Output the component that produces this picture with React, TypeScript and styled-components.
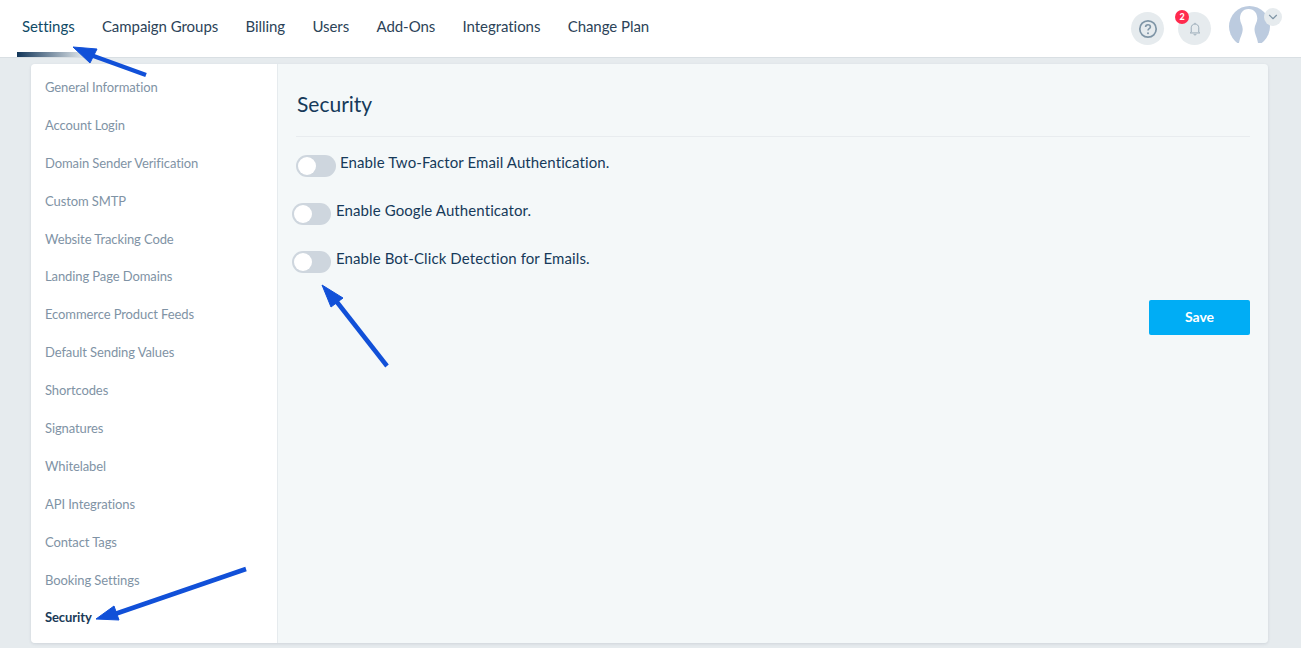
import React from 'react';
import styled, { createGlobalStyle } from 'styled-components';
import { ChevronDown } from 'lucide-react';

const NAV_ITEMS = ['Settings', 'Campaign Groups', 'Billing', 'Users', 'Add-Ons', 'Integrations', 'Change Plan'];

const MENU_ITEMS = [
  'General Information',
  'Account Login',
  'Domain Sender Verification',
  'Custom SMTP',
  'Website Tracking Code',
  'Landing Page Domains',
  'Ecommerce Product Feeds',
  'Default Sending Values',
  'Shortcodes',
  'Signatures',
  'Whitelabel',
  'API Integrations',
  'Contact Tags',
  'Booking Settings',
  'Security',
];

const OPTIONS = [
  { label: 'Enable Two-Factor Email Authentication.', first: true },
  { label: 'Enable Google Authenticator.', first: false },
  { label: 'Enable Bot-Click Detection for Emails.', first: false },
];

const Arrows = () => (
  <ArrowLayer width="1301" height="648" viewBox="0 0 1301 648">
    <g fill="#1150d8" stroke="#1150d8">
      <line x1="146" y1="75" x2="88" y2="54" strokeWidth="4.5" />
      <polygon points="73,47 97,49 90,63" strokeWidth="1" />
      <line x1="387" y1="366" x2="333" y2="297" strokeWidth="4.5" />
      <polygon points="322,285 343,298 331,307" strokeWidth="1" />
      <line x1="246" y1="569" x2="115" y2="614" strokeWidth="4.5" />
      <polygon points="96,619 114,606 119,620" strokeWidth="1" />
    </g>
  </ArrowLayer>
);

const App: React.FC = () => {
  return (
    <>
      <GlobalStyle />
      <Page>
        <Header>
          <Nav>
            {NAV_ITEMS.map((item, index) => (
              <NavLink key={item} $active={index === 0}>
                {item}
              </NavLink>
            ))}
          </Nav>
          <HeaderRight>
            <RoundButton>
              <svg width="20" height="20" viewBox="0 0 20 20" fill="none">
                <circle cx="10" cy="10" r="8.2" stroke="#7f95a6" strokeWidth="1.7" />
                <path
                  d="M7.6 8c0-1.4 1-2.3 2.4-2.3s2.4.9 2.4 2.2c0 1.800-2.400 1.800-2.400 3.600"
                  stroke="#7f95a6"
                  strokeWidth="1.6"
                />
                <circle cx="10" cy="14.2" r="1" fill="#7f95a6" />
              </svg>
            </RoundButton>
            <BellButton>
              <Badge>2</Badge>
              <svg width="12" height="14" viewBox="0 0 14 16" fill="none">
                <path
                  d="M2.6 11.6V6.5C2.6 4 4.5 2.2 7 2.2s4.400 1.800 4.400 4.300v5.100l1.100 1H1.500l1.100-1Z"
                  stroke="#8fa1af"
                  strokeWidth="1"
                />
                <path d="M5.600 13.800c.2.900.700 1.300 1.400 1.300s1.200-.400 1.400-1.300M7 .800v1.400" stroke="#8fa1af" strokeWidth="1" />
              </svg>
            </BellButton>
            <Avatar>
              <svg width="41" height="37" viewBox="0 0 41 37">
                <defs>
                  <clipPath id="avatar-clip">
                    <circle cx="20.5" cy="20.5" r="20.5" />
                  </clipPath>
                </defs>
                <g clipPath="url(#avatar-clip)">
                  <rect width="41" height="41" fill="#bccbdf" />
                  <path
                    d="M19.500 3C13.500 3 11 7.500 11 12.500 11 16.500 13.700 19 13.700 23 13.700 28 11 31 10 37H29C28 31 25.500 28 25.500 23 25.500 19 28.300 16.500 28.300 12.500 28.300 7.500 25.500 3 19.500 3Z"
                    fill="#fff"
                  />
                </g>
              </svg>
              <AvatarCaret>
                <ChevronDown size={14} color="#7f95a6" />
              </AvatarCaret>
            </Avatar>
          </HeaderRight>
        </Header>
        <Card>
          <Sidebar>
            {MENU_ITEMS.map((item) => (
              <MenuItem key={item} $active={item === 'Security'}>
                {item}
              </MenuItem>
            ))}
          </Sidebar>
          <Main>
            <Title>Security</Title>
            <OptionList>
              {OPTIONS.map((option) => (
                <OptionRow key={option.label} $first={option.first}>
                  <Toggle $first={option.first} />
                  <OptionLabel>{option.label}</OptionLabel>
                </OptionRow>
              ))}
            </OptionList>
            <Actions>
              <SaveButton>Save</SaveButton>
            </Actions>
          </Main>
        </Card>
        <Arrows />
      </Page>
    </>
  );
};

export default App;

const GlobalStyle = createGlobalStyle`
  html, body {
    margin: 0;
    padding: 0;
    background: #e6ebee;
  }

  body {
    font-family: Lato, "Open Sans", sans-serif;
  }

  * {
    box-sizing: border-box;
  }
`;

const Page = styled('div')`
  position: relative;
  width: 1301px;
  height: 648px;
  overflow: hidden;
`;

const ArrowLayer = styled('svg')`
  position: absolute;
  left: 0;
  top: 0;
  pointer-events: none;
`;

const Header = styled('header')`
  display: flex;
  justify-content: space-between;
  height: 58px;
  background: #fff;
  border-bottom: 1px solid #d9dfe3;
  padding: 0 20px 0 17px;
`;

const Nav = styled('nav')`
  display: flex;
  gap: 17.3px;
`;

const NavLink = styled('a')<{ $active?: boolean }>`
  position: relative;
  padding: 17px 5px 0;
  font-size: 15px;
  line-height: 18px;
  letter-spacing: -0.05px;
  color: ${({ $active }) => ($active ? '#0f4a66' : '#2c4358')};

  &::after {
    content: '';
    display: ${({ $active }) => ($active ? 'block' : 'none')};
    position: absolute;
    left: 0;
    right: -5px;
    bottom: 0;
    height: 5px;
    background: linear-gradient(90deg, #12365a, #e6ebee);
  }
`;

const HeaderRight = styled('div')`
  display: flex;
  align-items: flex-start;
  padding-top: 6px;
`;

const RoundButton = styled('div')`
  display: flex;
  align-items: center;
  justify-content: center;
  width: 33px;
  height: 33px;
  margin-top: 6px;
  border-radius: 50%;
  background: #e6ebee;
`;

const BellButton = styled(RoundButton)`
  position: relative;
  margin-left: 14px;
`;

const Badge = styled('span')`
  position: absolute;
  left: -3px;
  top: -2px;
  width: 14px;
  height: 14px;
  border-radius: 50%;
  background: #ff2a4d;
  color: #fff;
  font-size: 9px;
  font-weight: 900;
  line-height: 14px;
  text-align: center;
`;

const Avatar = styled('div')`
  position: relative;
  width: 41px;
  height: 37px;
  margin-left: 18px;
  margin-right: 11px;

  & svg {
    display: block;
  }
`;

const AvatarCaret = styled('span')`
  position: absolute;
  right: -12px;
  top: 2px;
  display: flex;
  align-items: center;
  justify-content: center;
  width: 18px;
  height: 18px;
  border-radius: 50%;
  background: #e6ebee;

  & svg {
    display: block;
  }
`;

const Card = styled('div')`
  display: flex;
  width: 1237px;
  height: 579px;
  margin: 6px 0 0 31px;
  border-radius: 4px;
  overflow: hidden;
  box-shadow: 0 1px 3px rgba(40, 60, 80, 0.12);
`;

const Sidebar = styled('aside')`
  display: flex;
  flex-direction: column;
  width: 247px;
  padding: 5px 0 0 14px;
  background: #fff;
  border-right: 1px solid #e6ebee;
`;

const MenuItem = styled('a')<{ $active?: boolean }>`
  height: 37.9px;
  font-size: 13px;
  line-height: 37.9px;
  letter-spacing: -0.1px;
  font-weight: ${({ $active }) => ($active ? 700 : 400)};
  color: ${({ $active }) => ($active ? '#1b3a57' : '#7f93a5')};
`;

const Main = styled('main')`
  flex: 1;
  padding: 0 18px 0 18px;
  background: #f4f8f9;
`;

const Title = styled('h1')`
  margin: 0;
  height: 73px;
  padding: 26px 0 0 1px;
  border-bottom: 1px solid #e8ecef;
  font-size: 21px;
  font-weight: 400;
  line-height: 28px;
  color: #163a5a;
`;

const OptionList = styled('div')`
  display: flex;
  flex-direction: column;
  gap: 26px;
  padding-top: 18px;
`;

const OptionRow = styled('div')<{ $first: boolean }>`
  display: flex;
  align-items: flex-start;
  gap: ${({ $first }) => ($first ? 4 : 5)}px;
  height: 22px;
  margin-left: ${({ $first }) => ($first ? 0 : -4)}px;
`;

const Toggle = styled('span')<{ $first: boolean }>`
  display: flex;
  align-items: center;
  width: ${({ $first }) => ($first ? 40 : 39)}px;
  height: 22px;
  padding-left: 2px;
  border-radius: 11px;
  background: #ced6de;

  &::before {
    content: '';
    width: 18px;
    height: 18px;
    border-radius: 50%;
    background: #fff;
  }
`;

const OptionLabel = styled('span')`
  margin-top: -3px;
  font-size: 15px;
  line-height: 20px;
  letter-spacing: 0.1px;
  color: #163a5a;
`;

const Actions = styled('div')`
  display: flex;
  justify-content: flex-end;
  padding-top: 27px;
`;

const SaveButton = styled('button')`
  width: 101px;
  height: 35px;
  padding: 0 0 2px;
  border: none;
  border-radius: 2px;
  background: #00adf5;
  color: #fff;
  font-family: inherit;
  font-size: 14px;
  font-weight: 700;
`;
